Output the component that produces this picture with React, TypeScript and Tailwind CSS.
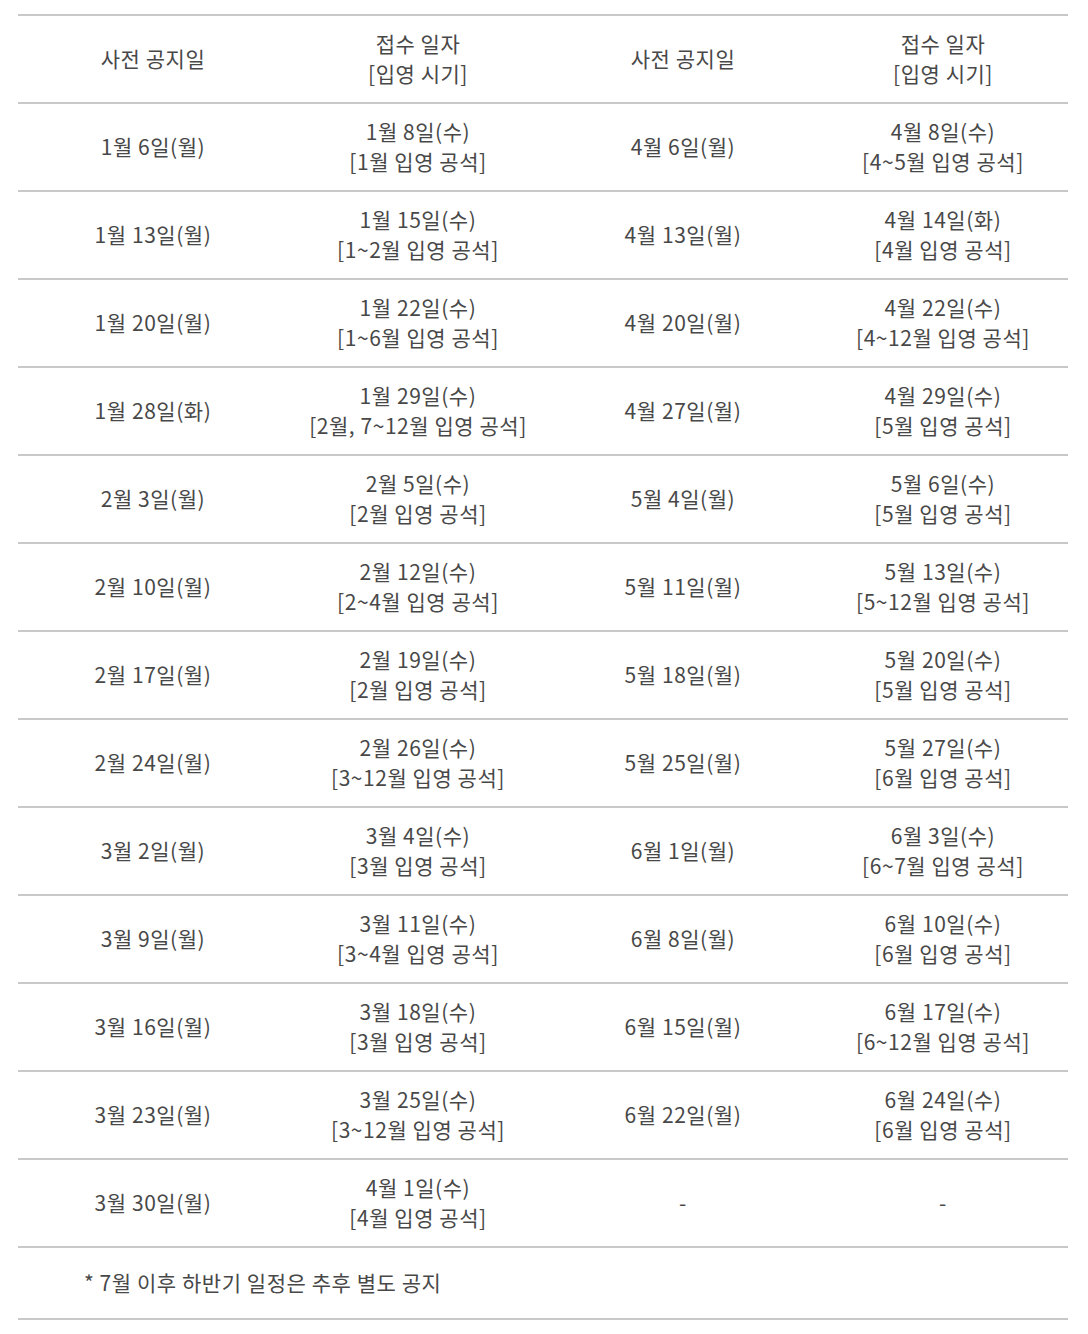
import React from "react";

const rows: [string, string, string, string, string, string][] = [
  ["1월 6일(월)", "1월 8일(수)", "[1월 입영 공석]", "4월 6일(월)", "4월 8일(수)", "[4~5월 입영 공석]"],
  ["1월 13일(월)", "1월 15일(수)", "[1~2월 입영 공석]", "4월 13일(월)", "4월 14일(화)", "[4월 입영 공석]"],
  ["1월 20일(월)", "1월 22일(수)", "[1~6월 입영 공석]", "4월 20일(월)", "4월 22일(수)", "[4~12월 입영 공석]"],
  ["1월 28일(화)", "1월 29일(수)", "[2월, 7~12월 입영 공석]", "4월 27일(월)", "4월 29일(수)", "[5월 입영 공석]"],
  ["2월 3일(월)", "2월 5일(수)", "[2월 입영 공석]", "5월 4일(월)", "5월 6일(수)", "[5월 입영 공석]"],
  ["2월 10일(월)", "2월 12일(수)", "[2~4월 입영 공석]", "5월 11일(월)", "5월 13일(수)", "[5~12월 입영 공석]"],
  ["2월 17일(월)", "2월 19일(수)", "[2월 입영 공석]", "5월 18일(월)", "5월 20일(수)", "[5월 입영 공석]"],
  ["2월 24일(월)", "2월 26일(수)", "[3~12월 입영 공석]", "5월 25일(월)", "5월 27일(수)", "[6월 입영 공석]"],
  ["3월 2일(월)", "3월 4일(수)", "[3월 입영 공석]", "6월 1일(월)", "6월 3일(수)", "[6~7월 입영 공석]"],
  ["3월 9일(월)", "3월 11일(수)", "[3~4월 입영 공석]", "6월 8일(월)", "6월 10일(수)", "[6월 입영 공석]"],
  ["3월 16일(월)", "3월 18일(수)", "[3월 입영 공석]", "6월 15일(월)", "6월 17일(수)", "[6~12월 입영 공석]"],
  ["3월 23일(월)", "3월 25일(수)", "[3~12월 입영 공석]", "6월 22일(월)", "6월 24일(수)", "[6월 입영 공석]"],
  ["3월 30일(월)", "4월 1일(수)", "[4월 입영 공석]", "-", "", "-"],
];

const font = {
  fontFamily: '"Noto Sans CJK KR", "Noto Sans", sans-serif',
};

function Cell({ a, b }: { a: string; b?: string }) {
  return (
    <div className="flex flex-col items-center justify-center text-center pb-[2px]">
      <span>{a}</span>
      {b ? <span>{b}</span> : null}
    </div>
  );
}

export default function App() {
  return (
    <div className="bg-white w-[1088px] min-h-[1334px] pt-[14px] px-[18px] text-[#484848] text-[21px] leading-[30px] tracking-[0.55px]" style={font}>
      <div className="border-t-2 border-[#c8c8c8] w-[1050px]">
        <div className="grid grid-cols-[270px_260px_270px_250px] h-[88px] border-b-2 border-[#c8c8c8]">
          <Cell a="사전 공지일" />
          <Cell a="접수 일자" b="[입영 시기]" />
          <Cell a="사전 공지일" />
          <Cell a="접수 일자" b="[입영 시기]" />
        </div>
        {rows.map((r, i) => (
          <div key={i} className="grid grid-cols-[270px_260px_270px_250px] h-[88px] border-b-2 border-[#c8c8c8]">
            <Cell a={r[0]} />
            <Cell a={r[1]} b={r[2]} />
            <Cell a={r[3]} />
            {r[4] ? <Cell a={r[4]} b={r[5]} /> : <Cell a={r[5]} />}
          </div>
        ))}
        <div className="h-[72px] border-b-2 border-[#c8c8c8] flex items-center pl-[66px] pb-[2px]">
          <span>* 7월 이후 하반기 일정은 추후 별도 공지</span>
        </div>
      </div>
    </div>
  );
}
